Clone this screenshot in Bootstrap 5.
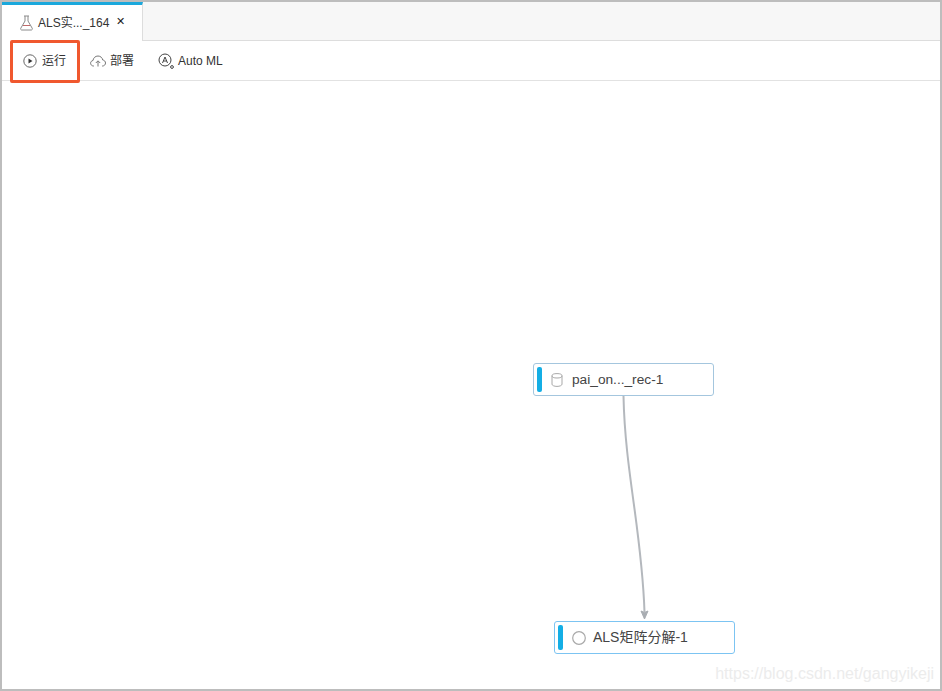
<!DOCTYPE html>
<html lang="zh">
<head>
<meta charset="utf-8">
<title>ALS</title>
<link href="https://cdn.jsdelivr.net/npm/bootstrap@5.3.0/dist/css/bootstrap.min.css" rel="stylesheet">
<style>
html,body{height:100%;margin:0;overflow:hidden}
body{font-family:"Liberation Sans","Noto Sans CJK SC",sans-serif;font-size:12px;color:#333;background:#fff}
.frame{width:942px;height:691px;border:2px solid #bdbdbd;position:relative;display:flex;flex-direction:column;overflow:hidden}
.tabbar{height:39px;background:#f7f7f7;border-bottom:1px solid #ddd;flex:none}
.tabitem{width:141px;height:39px;background:#fff;border-top:3px solid #1ba8dc;border-right:1px solid #ddd;padding-left:17px;gap:4px}
.tabclose{font-size:11px;line-height:1;margin-left:3px;color:#222;margin-top:-4px}
.toolbar{height:40px;border-bottom:1px solid #e2e2e2;flex:none;padding-left:21px}
.toolitem{gap:5px;color:#333;white-space:nowrap}
.gapa{gap:4px}
.t1{margin-right:24px}
.t2{margin-right:24px}
.hilite{position:absolute;left:8px;top:38px;width:70px;height:43px;border:3px solid #f0582e;border-radius:2px}
.edge{position:absolute;left:0;top:0}
.flownode{position:absolute;width:181px;height:33px;background:#fff;border:1px solid #7cc4f2;border-radius:3px;font-size:13.7px;color:#444;padding-left:3px;gap:9px;white-space:nowrap}
.n1{left:531px;top:361px;border-color:#a4c6de}
.n1 .nodetext{margin-top:2px}
.n2{left:552px;top:619px;font-size:14px}
.n2 .nodetext{margin-left:-2px}
.nodebar{width:5px;height:25px;background:#14aee5;border-radius:2px;flex:none}
.wmark{position:absolute;right:6px;bottom:7px;font-size:16px;color:#ececec;line-height:1}
</style>
</head>
<body>
<div class="frame">
  <div class="tabbar d-flex">
    <div class="tabitem d-flex align-items-center">
      <svg width="15" height="16" viewBox="0 0 15 16" fill="none" stroke="#8a8a8a" stroke-width="1"><path d="M5 1h5M6 1v5L1.800 13.200c-.5 1 .1 1.800 1 1.800h9.400c.9 0 1.500-.8 1-1.800L9 6V1"/><path d="M4 10.500h7" stroke="#c06a6a"/></svg>
      <span>ALS实..._164</span>
      <span class="tabclose">✕</span>
    </div>
  </div>
  <div class="toolbar d-flex align-items-center">
    <div class="toolitem t1 d-flex align-items-center">
      <svg width="14" height="14" viewBox="0 0 14 14" fill="none"><circle cx="7" cy="7" r="6.200" stroke="#666"/><path d="M5.500 4.500l4 2.500-4 2.500z" fill="#333"/></svg>
      <span>运行</span>
    </div>
    <div class="toolitem gapa t2 d-flex align-items-center">
      <svg width="16" height="12" viewBox="0 0 16 12" fill="none" stroke="#777"><path d="M4 11H3.500C1.800 11 .6 9.700.6 8.200c0-1.400 1-2.500 2.400-2.700C3.300 3 5.300 1 8 1c2.500 0 4.400 1.800 4.700 4 1.600.1 2.800 1.500 2.800 3 0 1.700-1.300 3-3 3H12"/><path d="M8 11.500V6M5.800 8L8 5.800 10.200 8"/></svg>
      <span>部署</span>
    </div>
    <div class="toolitem gapa d-flex align-items-center">
      <svg width="16" height="16" viewBox="0 0 16 16" fill="none" stroke="#444"><circle cx="7" cy="7" r="6"/><path d="M4.500 10L7 4l2.500 6M5.400 8h3.200"/><circle cx="14" cy="14" r="1.400"/></svg>
      <span>Auto ML</span>
    </div>
  </div>
  <div class="hilite"></div>
  <svg class="edge" width="938" height="687" viewBox="0 0 938 687" fill="none">
    <path d="M621.500 394C623 470 640 530 642.500 610" stroke="#b4b8bd" stroke-width="2"/>
    <path d="M639 609l3.500 8 3.500-8-3.500 1.500z" fill="#a9adb2" stroke="#a9adb2"/>
  </svg>
  <div class="flownode n1 d-flex align-items-center">
    <span class="nodebar"></span>
    <svg width="12" height="14" viewBox="0 0 12 14" fill="none" stroke="#a8a8a8"><ellipse cx="6" cy="2.800" rx="5" ry="2.200"/><path d="M1 2.800v8.400C1 12.400 3.200 13.400 6 13.400s5-1 5-2.200V2.800"/></svg>
    <span class="nodetext">pai_on..._rec-1</span>
  </div>
  <div class="flownode n2 d-flex align-items-center">
    <span class="nodebar"></span>
    <svg width="14" height="14" viewBox="0 0 14 14" fill="none"><circle cx="7" cy="7" r="6.300" stroke="#a9a9a9" stroke-width="1.200"/></svg>
    <span class="nodetext">ALS矩阵分解-1</span>
  </div>
  <div class="wmark">https://blog.csdn.net/gangyikeji</div>
</div>
<script src="https://cdn.jsdelivr.net/npm/bootstrap@5.3.0/dist/js/bootstrap.bundle.min.js"></script>
</body>
</html>
